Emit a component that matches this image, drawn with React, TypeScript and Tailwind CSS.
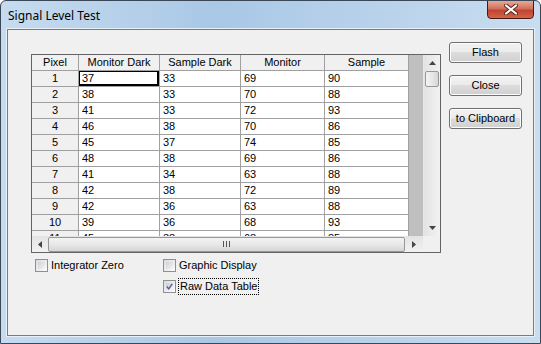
import React from "react";

const rows = [
  [1, 37, 33, 69, 90],
  [2, 38, 33, 70, 88],
  [3, 41, 33, 72, 93],
  [4, 46, 38, 70, 86],
  [5, 45, 37, 74, 85],
  [6, 48, 38, 69, 86],
  [7, 41, 34, 63, 88],
  [8, 42, 38, 72, 89],
  [9, 42, 36, 63, 88],
  [10, 39, 36, 68, 93],
  [11, 45, 38, 68, 85],
];

const headers = ["Pixel", "Monitor Dark", "Sample Dark", "Monitor", "Sample"];

const Arrow = ({ dir }: { dir: "up" | "down" | "left" | "right" }) => {
  const pts = {
    up: "0,4 3.5,0 7,4",
    down: "0,0 3.5,4 7,0",
    left: "4,0 0,3.5 4,7",
    right: "0,0 4,3.5 0,7",
  }[dir];
  const vertical = dir === "up" || dir === "down";
  return (
    <svg width={vertical ? 7 : 4} height={vertical ? 4 : 7} viewBox={vertical ? "0 0 7 4" : "0 0 4 7"}>
      <polygon points={pts} fill="#444" />
    </svg>
  );
};

const Checkbox = ({ checked }: { checked?: boolean }) => (
  <div className="w-[13px] h-[13px] border border-[#8e8f8f] bg-[linear-gradient(135deg,#dcdcdc,#fbfbfb)] p-[2px] flex items-center justify-center">
    <div className="w-full h-full bg-[linear-gradient(135deg,#cbcfd5,#f6f6f6)] flex items-center justify-center">
      {checked && (
        <svg width="9" height="9" viewBox="0 0 9 9">
          <path d="M1 4.5 L3.5 7.5 L8 1" stroke="#4a5f97" strokeWidth="1.8" fill="none" />
        </svg>
      )}
    </div>
  </div>
);

const Button = ({ label }: { label: string }) => (
  <div className="w-[73px] h-[21px] rounded-[3px] border border-[#707070] bg-[linear-gradient(#f2f2f2_0%,#ebebeb_50%,#dddddd_50%,#cfcfcf_100%)] shadow-[inset_0_0_0_1px_#fcfcfc] flex items-center justify-center text-[11px] text-black">
    {label}
  </div>
);

export default function App() {
  return (
    <div
      className="w-[541px] h-[344px] flex flex-col bg-[linear-gradient(90deg,#c6dbef,#a9c8e6_40%,#b8d2eb_70%,#c9ddf0)] border border-[#3a4756] rounded-t-[6px] overflow-hidden"
      style={{ fontFamily: '"Liberation Sans", Arial, sans-serif' }}
    >
      <div className="h-[28px] flex items-start justify-between pl-[7px] pr-[6px] shrink-0">
        <div className="pt-[6px] text-[12px] text-black" style={{ fontFamily: '"Noto Sans", "Open Sans", sans-serif' }}>
          Signal Level Test
        </div>
        <div className="w-[47px] h-[19px] -mt-px rounded-b-[4px] border border-[#4a1a12] bg-[linear-gradient(#e9a896,#d0705e_45%,#c2432e_55%,#d2654d)] flex items-center justify-center">
          <svg width="14" height="11" viewBox="0 0 14 11">
            <path d="M2 1.5 L12 9.5 M12 1.5 L2 9.5" stroke="#5b2519" strokeWidth="4" strokeLinecap="round" />
            <path d="M2 1.5 L12 9.5 M12 1.5 L2 9.5" stroke="#ffffff" strokeWidth="2.2" strokeLinecap="round" />
          </svg>
        </div>
      </div>
      <div className="flex-1 mx-[6px] mb-[7px] border border-[#6f7d8c] shadow-[0_0_0_1px_#e8f1fa] bg-[#f0f0f0] flex pl-[23px] pt-[12px] text-[11px] text-black">
        <div className="flex flex-col mt-[12px]">
          <div className="w-[410px] h-[199px] border border-[#646464] bg-white grid grid-cols-[391px_17px] grid-rows-[181px_16px]">
            <div className="overflow-hidden relative">
              <div className="grid grid-cols-[47px_81px_81px_84px_84px_14px] auto-rows-[16px]">
                {headers.map((h) => (
                  <div key={h} className="bg-[#f0f0f0] border-r border-b border-[#a0a0a0] flex items-center justify-center">
                    {h}
                  </div>
                ))}
                <div className="bg-[#bfbfbf]" />
                {rows.map((r) => (
                  <React.Fragment key={r[0]}>
                    <div className="bg-[#f0f0f0] border-r border-b border-[#a0a0a0] flex items-center justify-center">
                      {r[0]}
                    </div>
                    {r.slice(1).map((v, i) => (
                      <div
                        key={i}
                        className={
                          "border-r border-b border-[#a0a0a0] flex items-center pl-[3px] " +
                          (r[0] === 1 && i === 0 ? "shadow-[inset_1px_1px_0_#000,inset_-2px_-2px_0_#000]" : "")
                        }
                      >
                        {v}
                      </div>
                    ))}
                    <div className="bg-[#bfbfbf]" />
                  </React.Fragment>
                ))}
              </div>
            </div>
            <div className="bg-[linear-gradient(90deg,#e3e3e3,#f2f2f2)] border-l border-[#e6e6e6] flex flex-col">
              <div className="h-[16px] flex items-center justify-center">
                <Arrow dir="up" />
              </div>
              <div className="h-[16px] mx-px rounded-[2px] border border-[#979797] bg-[linear-gradient(90deg,#f3f3f3,#e8e8e8_50%,#d6d6d6)]" />
              <div className="flex-1" />
              <div className="h-[16px] flex items-center justify-center">
                <Arrow dir="down" />
              </div>
            </div>
            <div className="bg-[linear-gradient(#e3e3e3,#f2f2f2)] flex items-center">
              <div className="w-[16px] flex items-center justify-center">
                <Arrow dir="left" />
              </div>
              <div className="flex-1 h-[15px] rounded-[2px] border border-[#979797] bg-[linear-gradient(#f3f3f3,#e8e8e8_50%,#d6d6d6)] flex items-center justify-center gap-[2px]">
                <div className="w-px h-[6px] bg-[#555]" />
                <div className="w-px h-[6px] bg-[#555]" />
                <div className="w-px h-[6px] bg-[#555]" />
              </div>
              <div className="w-[18px] flex items-center justify-center">
                <Arrow dir="right" />
              </div>
            </div>
            <div className="bg-[#f0f0f0]" />
          </div>
          <div className="grid grid-cols-[128px_1fr] pl-[4px] mt-[6px] gap-y-[8px]">
            <div className="flex items-center gap-[3px] h-[13px]">
              <Checkbox />
              <span>Integrator Zero</span>
            </div>
            <div className="flex items-center gap-[3px] h-[13px]">
              <Checkbox />
              <span>Graphic Display</span>
            </div>
            <div />
            <div className="flex items-center gap-[2px] h-[13px]">
              <Checkbox checked />
              <span className="border border-dotted border-black px-px leading-[15px]">Raw Data Table</span>
            </div>
          </div>
        </div>
        <div className="flex flex-col gap-[12px] ml-[8px]">
          <Button label="Flash" />
          <Button label="Close" />
          <Button label="to Clipboard" />
        </div>
      </div>
    </div>
  );
}
